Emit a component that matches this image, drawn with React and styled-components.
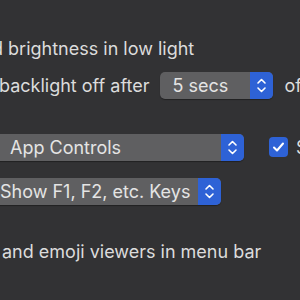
import styled, { createGlobalStyle } from "styled-components";

const Global = createGlobalStyle`
  html, body {
    margin: 0;
    padding: 0;
    background: #323234;
  }
`;

const Pane = styled.div`
  width: 300px;
  height: 300px;
  overflow: hidden;
  background: #323234;
  color: #dcdcdc;
  font-family: "Inter", "Noto Sans", sans-serif;
  font-size: 18px;
  padding-top: 34px;
  box-sizing: border-box;
`;

const Row = styled.div`
  display: flex;
  align-items: center;
  height: ${(p) => p.h || 28}px;
  margin-top: ${(p) => p.top || 0}px;
  margin-left: ${(p) => p.shift || 0}px;
  white-space: nowrap;
`;

const Label = styled.span`
  flex-shrink: 0;
`;

const Popup = styled.div`
  display: flex;
  align-items: stretch;
  flex-shrink: 0;
  width: ${(p) => p.w}px;
  height: 27px;
  margin: 0 ${(p) => p.after || 0}px 0 ${(p) => p.before || 0}px;
  border-radius: 5px;
  overflow: hidden;
  background: #5f5f61;
  box-shadow: 0 1px 1px rgba(0, 0, 0, 0.35);
`;

const PopupText = styled.span`
  flex: 1;
  display: flex;
  align-items: center;
  padding-left: ${(p) => p.pad || 12}px;
  color: #e4e4e4;
`;

const Stepper = styled.div`
  width: 23px;
  display: flex;
  align-items: center;
  justify-content: center;
  background: #2e62d6;
`;

const Check = styled.div`
  width: 19px;
  height: 20px;
  margin: 0 8px 0 25px;
  border-radius: 4px;
  background: #2e62d6;
  display: flex;
  align-items: center;
  justify-content: center;
  flex-shrink: 0;
`;

function Arrows() {
  return (
    <svg width="11" height="17" viewBox="0 0 11 17" fill="none">
      <path d="M2 6 L5.5 2.5 L9 6" stroke="#fff" strokeWidth="1.6" strokeLinecap="round" strokeLinejoin="round" />
      <path d="M2 11 L5.5 14.5 L9 11" stroke="#fff" strokeWidth="1.6" strokeLinecap="round" strokeLinejoin="round" />
    </svg>
  );
}

export default function App() {
  return (
    <>
      <Global />
      <Pane>
        <Row shift={-8}>
          <Label>d brightness in low light</Label>
        </Row>
        <Row top={10} h={27} shift={-1}>
          <Label>backlight off after</Label>
          <Popup w={113} before={11} after={11}>
            <PopupText>5 secs</PopupText>
            <Stepper>
              <Arrows />
            </Stepper>
          </Popup>
          <Label>of</Label>
        </Row>
        <Row top={34} shift={-8}>
          <Popup w={252}>
            <PopupText pad={18}>App Controls</PopupText>
            <Stepper>
              <Arrows />
            </Stepper>
          </Popup>
          <Check>
            <svg width="13" height="12" viewBox="0 0 13 12" fill="none">
              <path d="M2 6.5 L5 9.5 L11 2.5" stroke="#fff" strokeWidth="2" strokeLinecap="round" strokeLinejoin="round" />
            </svg>
          </Check>
          <Label>Show Control Strip</Label>
        </Row>
        <Row top={17} h={27} shift={-12}>
          <Popup w={233}>
            <PopupText pad={12}>Show F1, F2, etc. Keys</PopupText>
            <Stepper>
              <Arrows />
            </Stepper>
          </Popup>
        </Row>
        <Row top={32} shift={2}>
          <Label>and emoji viewers in menu bar</Label>
        </Row>
      </Pane>
    </>
  );
}
